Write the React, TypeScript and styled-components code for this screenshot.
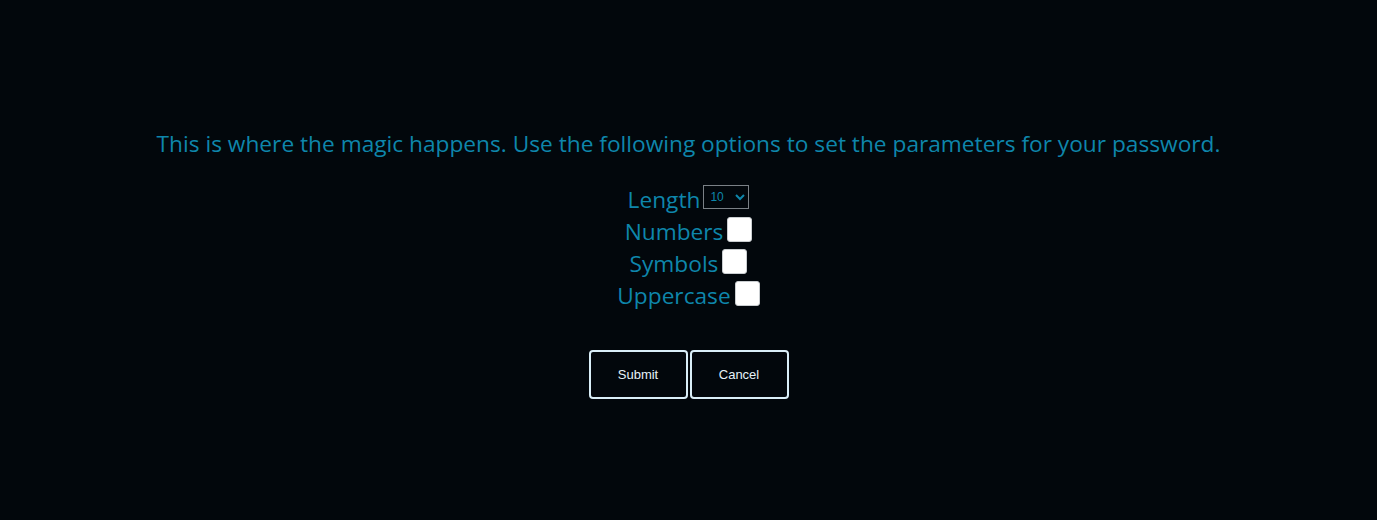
import React from "react";
import styled, { createGlobalStyle } from "styled-components";

const Global = createGlobalStyle`
  html, body { margin: 0; padding: 0; background: #02070c; }
  body { font-family: "Open Sans", "Noto Sans", sans-serif; }
`;

const Page = styled.main`
  min-height: 520px;
  box-sizing: border-box;
  padding-top: 128px;
  display: flex;
  flex-direction: column;
  align-items: center;
  color: #0e86ab;
`;

const Intro = styled.p`
  margin: 0;
  font-size: 22.7px;
  line-height: 32px;
  text-align: center;
  white-space: nowrap;
`;

const Options = styled.div`
  margin-top: 24px;
  display: flex;
  flex-direction: column;
  align-items: center;
`;

const Row = styled.label`
  display: flex;
  align-items: flex-start;
  height: 32px;
  line-height: 32px;
  font-size: 22.7px;
`;

const Select = styled.select`
  box-sizing: border-box;
  width: 46px;
  height: 24px;
  margin: 1px 0 0 3px;
  padding: 0 0 0 2px;
  background: #02070c;
  color: #0e86ab;
  border: 1px solid #7a8086;
  border-radius: 0;
  font-size: 12px;
  font-family: "Liberation Sans", Arial, sans-serif;
`;

const Box = styled.input.attrs({ type: "checkbox" })`
  appearance: none;
  box-sizing: border-box;
  width: 25px;
  height: 25px;
  margin: 1px 0 0 4px;
  background: #ffffff;
  border: 1px solid #c9cdd0;
  border-radius: 3px;
`;

const Buttons = styled.div`
  margin-top: 38px;
  display: flex;
  gap: 2px;
`;

const Button = styled.button`
  width: 99px;
  height: 49px;
  background: #02070c;
  color: #e6f2f8;
  border: 2px solid #d9eef8;
  border-radius: 4px;
  font-family: "Liberation Sans", Arial, sans-serif;
  font-size: 13px;
`;

export default function App() {
  return (
    <>
      <Global />
      <Page>
        <Intro>
          This is where the magic happens. Use the following options to set the parameters for your password.
        </Intro>
        <Options>
          <Row>
            Length
            <Select defaultValue="10">
              {[8, 9, 10, 11, 12, 13, 14, 15, 16].map((n) => (
                <option key={n} value={String(n)}>{n}</option>
              ))}
            </Select>
          </Row>
          <Row>Numbers<Box /></Row>
          <Row>Symbols<Box /></Row>
          <Row>Uppercase<Box /></Row>
        </Options>
        <Buttons>
          <Button>Submit</Button>
          <Button>Cancel</Button>
        </Buttons>
      </Page>
    </>
  );
}
